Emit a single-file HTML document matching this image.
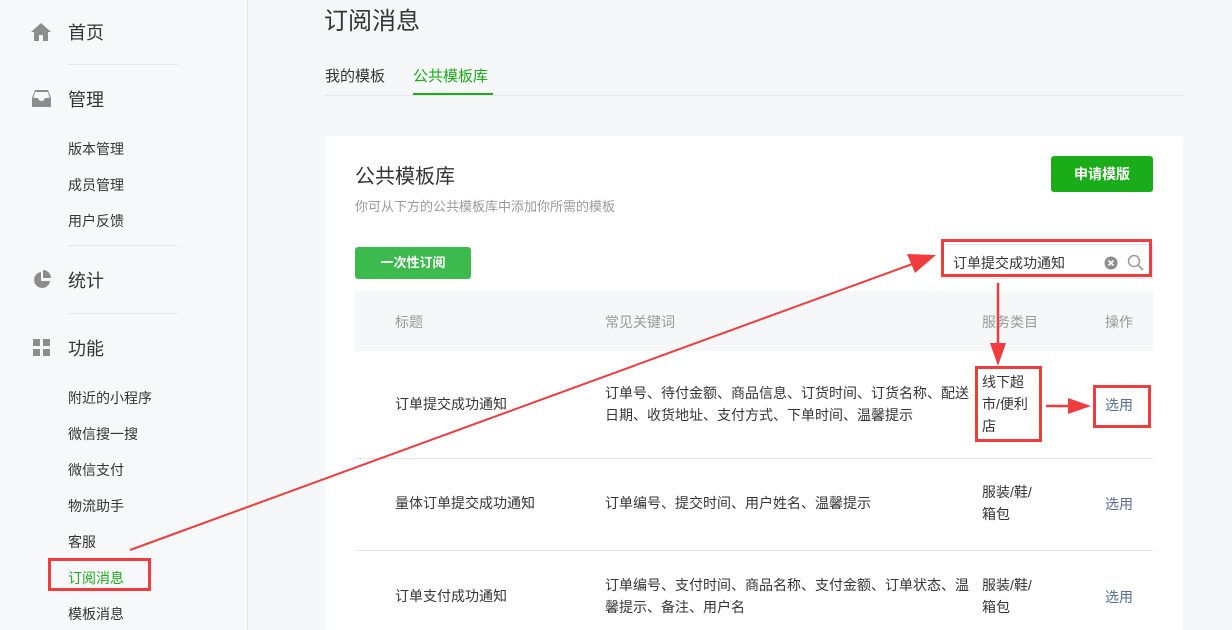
<!DOCTYPE html>
<html><head><meta charset="utf-8"><style>
*{margin:0;padding:0;box-sizing:border-box}
html,body{width:1232px;height:630px;overflow:hidden}
body{background:#f6f7f9;font-family:"Liberation Sans","Noto Sans CJK SC",sans-serif;color:#353535;position:relative}
.a{position:absolute;white-space:nowrap}
.side{position:absolute;left:0;top:0;width:248px;height:630px;background:#f7f8fa;border-right:1px solid #e4e6e9}
.big{font-size:18px;color:#353535}
.sm{font-size:14px;color:#353535}
.hr{position:absolute;left:68px;width:110px;height:1px;background:#e4e6e9}
.card{position:absolute;left:325px;top:136px;width:858px;height:500px;background:#fff;border-radius:4px}
.t{font-size:14px;color:#353535;line-height:22px}
.row{position:absolute;left:355px;width:798px;height:1px;background:#e7e7eb}
.red{position:absolute;border:3px solid #f03c3c}
.link{color:#576b95;font-size:14px}
</style></head><body>
<div class="side">
<svg class="a" style="left:30px;top:22px" width="22" height="20"><path d="M11 1 L21 10 H18 V19 H13 V13 H9 V19 H4 V10 H1 Z" fill="#8d8d8d"/></svg>
<div class="a big" style="left:68px;top:19px">首页</div>
<div class="hr" style="top:64px"></div>
<svg class="a" style="left:32px;top:90px" width="19" height="17"><path d="M3 0 H16 L19 8 V17 H0 V8 Z" fill="#8d8d8d"/><path d="M3 2 H16 L17.5 8 H13 Q12 11 9.5 11 Q7 11 6 8 H1.5 Z" fill="#f7f8fa"/></svg>
<div class="a big" style="left:68px;top:86px">管理</div>
<div class="a sm" style="left:68px;top:139px">版本管理</div>
<div class="a sm" style="left:68px;top:175px">成员管理</div>
<div class="a sm" style="left:68px;top:211px">用户反馈</div>
<div class="hr" style="top:245px"></div>
<svg class="a" style="left:32px;top:270px" width="20" height="20"><path d="M9 2 A8 8 0 1 0 18 11 H9 Z" fill="#8d8d8d"/><path d="M11 0 A8 8 0 0 1 19 8 H11 Z" fill="#8d8d8d"/></svg>
<div class="a big" style="left:68px;top:267px">统计</div>
<div class="hr" style="top:313px"></div>
<svg class="a" style="left:33px;top:339px" width="18" height="18"><rect x="0" y="0" width="7" height="7" fill="#8d8d8d"/><rect x="10" y="0" width="7" height="7" fill="#8d8d8d"/><rect x="0" y="10" width="7" height="7" fill="#8d8d8d"/><rect x="10" y="10" width="7" height="7" fill="#8d8d8d"/></svg>
<div class="a big" style="left:68px;top:335px">功能</div>
<div class="a sm" style="left:68px;top:388px">附近的小程序</div>
<div class="a sm" style="left:68px;top:424px">微信搜一搜</div>
<div class="a sm" style="left:68px;top:460px">微信支付</div>
<div class="a sm" style="left:68px;top:496px">物流助手</div>
<div class="a sm" style="left:68px;top:532px">客服</div>
<div class="a sm" style="left:68px;top:568px;color:#1aad19">订阅消息</div>
<div class="a sm" style="left:68px;top:604px">模板消息</div>
</div>
<div class="red" style="left:48px;top:558px;width:103px;height:33px"></div>

<div class="a" style="left:324px;top:1px;font-size:24px;color:#353535">订阅消息</div>
<div class="a" style="left:325px;top:65px;font-size:15px">我的模板</div>
<div class="a" style="left:413px;top:65px;font-size:15px;color:#1aad19">公共模板库</div>
<div class="a" style="left:325px;top:95px;width:858px;height:1px;background:#e4e6e9"></div>
<div class="a" style="left:413px;top:93px;width:80px;height:2px;background:#1aad19"></div>

<div class="card"></div>
<div class="a" style="left:355px;top:160px;font-size:20px">公共模板库</div>
<div class="a" style="left:355px;top:196px;font-size:13px;color:#9a9a9a">你可从下方的公共模板库中添加你所需的模板</div>
<div class="a" style="left:1051px;top:156px;width:102px;height:36px;background:#1aad19;border-radius:3px;color:#fff;font-size:14px;font-weight:bold;text-align:center;line-height:36px">申请模版</div>
<div class="a" style="left:355px;top:247px;width:116px;height:32px;background:#3dba4d;border-radius:3px;color:#fff;font-size:13px;font-weight:bold;text-align:center;line-height:32px">一次性订阅</div>

<div class="a" style="left:943px;top:244px;width:210px;height:35px;border:1px solid #e4e6e9;background:#fff"></div>
<div class="a" style="left:953px;top:253px;font-size:14px">订单提交成功通知</div>
<svg class="a" style="left:1104px;top:256px" width="14" height="14"><circle cx="7" cy="7" r="6.5" fill="#8d8d8d"/><path d="M4.5 4.5 L9.5 9.5 M9.5 4.5 L4.5 9.5" stroke="#fff" stroke-width="1.6"/></svg>
<svg class="a" style="left:1127px;top:254px" width="17" height="17"><circle cx="7" cy="7" r="5.5" fill="none" stroke="#9a9a9a" stroke-width="1.5"/><path d="M11 11 L16 16" stroke="#9a9a9a" stroke-width="1.6"/></svg>
<div class="red" style="left:941px;top:239px;width:211px;height:38px"></div>

<div class="a" style="left:355px;top:291px;width:798px;height:60px;background:#f6f7f9"></div>
<div class="a" style="left:395px;top:312px;font-size:14px;color:#9a9a9a">标题</div>
<div class="a" style="left:605px;top:312px;font-size:14px;color:#9a9a9a">常见关键词</div>
<div class="a" style="left:982px;top:312px;font-size:14px;color:#9a9a9a">服务类目</div>
<div class="a" style="left:1105px;top:312px;font-size:14px;color:#9a9a9a">操作</div>

<div class="a t" style="left:395px;top:393px">订单提交成功通知</div>
<div class="a t" style="left:605px;top:382px;white-space:normal;width:370px">订单号、待付金额、商品信息、订货时间、订货名称、配送日期、收货地址、支付方式、下单时间、温馨提示</div>
<div class="a t" style="left:982px;top:371px;white-space:normal;width:56px">线下超市/便利店</div>
<div class="a link" style="left:1105px;top:395px">选用</div>
<div class="red" style="left:975px;top:366px;width:67px;height:76px"></div>
<div class="red" style="left:1093px;top:385px;width:58px;height:43px"></div>
<div class="row" style="top:458px"></div>

<div class="a t" style="left:395px;top:492px">量体订单提交成功通知</div>
<div class="a t" style="left:605px;top:492px">订单编号、提交时间、用户姓名、温馨提示</div>
<div class="a t" style="left:982px;top:481px;white-space:normal;width:56px">服装/鞋/箱包</div>
<div class="a link" style="left:1105px;top:494px">选用</div>
<div class="row" style="top:550px"></div>

<div class="a t" style="left:395px;top:585px">订单支付成功通知</div>
<div class="a t" style="left:605px;top:574px;white-space:normal;width:370px">订单编号、支付时间、商品名称、支付金额、订单状态、温馨提示、备注、用户名</div>
<div class="a t" style="left:982px;top:574px;white-space:normal;width:56px">服装/鞋/箱包</div>
<div class="a link" style="left:1105px;top:587px">选用</div>

<svg class="a" style="left:0;top:0" width="1232" height="630">
<path d="M130 550 L915 263" stroke="#f03c3c" stroke-width="2"/>
<path d="M936 255 L907 254 L915 273 Z" fill="#f03c3c"/>
<path d="M998 283 L998 348" stroke="#f03c3c" stroke-width="2.5"/>
<path d="M990 343 L1006 343 L998 366 Z" fill="#f03c3c"/>
<path d="M1046 406 L1072 406" stroke="#f03c3c" stroke-width="2.5"/>
<path d="M1068 398 L1091 406 L1068 414 Z" fill="#f03c3c"/>
</svg>
</body></html>
